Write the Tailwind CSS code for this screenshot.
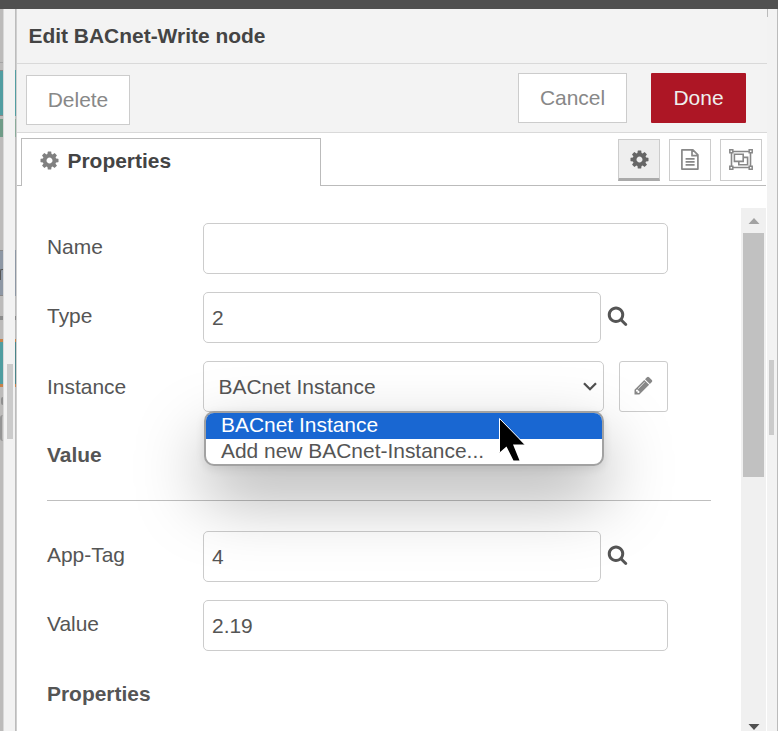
<!DOCTYPE html>
<html lang="en">
<head>
<meta charset="utf-8">
<title>Edit BACnet-Write node</title>
<script src="https://cdn.jsdelivr.net/npm/@tailwindcss/browser@4"></script>
</head>
<body class="w-[778px] h-[731px] overflow-hidden bg-white font-['Liberation_Sans',Arial,sans-serif] text-[20.95px] leading-6 text-[#555]">
<svg class="hidden">
  <symbol id="cog" viewBox="0 0 1792 1792"><path d="M1152 896q0-106-75-181t-181-75-181 75-75 181 75 181 181 75 181-75 75-181zm512-109v222q0 12-8 23t-20 13l-185 28q-19 54-39 91 35 50 107 138 10 12 10 25t-9 23q-27 37-99 108t-94 71q-12 0-26-9l-138-108q-44 23-91 38-16 136-29 186-7 28-36 28h-222q-14 0-24.5-8.5t-11.5-21.5l-28-184q-49-16-90-37l-141 107q-10 9-25 9-14 0-25-11-126-114-165-168-7-10-7-23 0-12 8-23 15-21 51-66.5t54-70.5q-27-50-41-99l-183-27q-13-2-21-12.5t-8-23.5v-222q0-12 8-23t19-13l186-28q14-46 39-92-40-57-107-138-10-12-10-24 0-10 9-23 26-36 98.5-107.5t94.5-71.5q13 0 26 10l138 107q44-23 91-38 16-136 29-186 7-28 36-28h222q14 0 24.5 8.5t11.5 21.5l28 184q49 16 90 37l142-107q9-9 24-9 13 0 25 10 129 119 165 170 7 8 7 22 0 12-8 23-15 21-51 66.5t-54 70.5q26 50 41 98l183 28q13 2 21 12.5t8 23.5z"/></symbol>
  <symbol id="search" viewBox="0 0 1792 1792"><path d="M1216 832q0-185-131.5-316.5t-316.5-131.5-316.5 131.5-131.5 316.5 131.5 316.5 316.5 131.5 316.5-131.5 131.5-316.5zm512 832q0 52-38 90t-90 38q-54 0-90-38l-343-342q-179 124-399 124-143 0-273.5-55.5t-225-150-150-225-55.5-273.5 55.5-273.5 150-225 225-150 273.5-55.5 273.5 55.5 225 150 150 225 55.5 273.5q0 220-124 399l343 343q37 37 37 90z"/></symbol>
</svg>
<div class="flex flex-col h-full">
  <div class="h-[9px] shrink-0 bg-[#505050]"></div>
  <div class="flex flex-1 min-h-0">
    <!-- dimmed flow canvas behind the tray -->
    <div class="w-[3px] flex flex-col shrink-0 bg-[#bcbbba]">
      <div class="h-[53px]"></div><div class="h-px bg-[#a5a5a5]"></div><div class="h-[7px]"></div>
      <div class="h-[46px] border-y border-[#888] bg-[#519da1]"></div><div class="h-[3px]"></div>
      <div class="h-[18px] bg-[#6f9c88]"></div><div class="h-[113px]"></div>
      <div class="h-[46px] border-y border-[#888] bg-[#8d97a4] pt-[18px]"><div class="w-[3px] h-[11px] border-l border-t border-[#555] rounded-tl-[2px]"></div></div><div class="h-5"></div>
      <div class="h-1 bg-[#8c8c8c]"></div><div class="h-[19px]"></div>
      <div class="h-12 border-y-[3px] border-[#c8824a] bg-[#4f9da0]"></div><div class="h-[10px]"></div>
      <div class="h-2 w-[2px] ml-px bg-[#8f8f8f] rounded-l"></div><div class="h-[10px]"></div><div class="h-[26px] border-l-2 border-[#959595] rounded-l-full"></div>
    </div>
    <div class="w-px shrink-0 bg-[#d8d8d8]"></div>
    <div class="w-[11px] shrink-0 bg-[#f2f2f2] pt-[355px] pl-[3px]"><div class="w-[6px] h-[75px] bg-[#cbcbcb]"></div></div>
    <div class="w-px shrink-0 flex flex-col bg-[#bcbcbc]">
      <div class="h-[61px]"></div><div class="h-[46px] bg-[#519da1]"></div><div class="h-[3px]"></div><div class="h-[18px] bg-[#8aab9a]"></div>
      <div class="h-[113px]"></div><div class="h-[46px] bg-[#8d97a4]"></div><div class="h-[20px]"></div><div class="h-1 bg-[#888]"></div><div class="h-[19px]"></div>
      <div class="h-12 border-y-[3px] border-[#c8824a] bg-[#4a8589]"></div>
    </div>
    <div class="w-px shrink-0 bg-[#cfcfcf]"></div>

    <main class="w-[750px] shrink-0 flex flex-col bg-white">
      <header class="h-[55px] shrink-0 bg-[#f3f3f3] border-b border-[#d9d9d9] pl-[11.5px] pt-[15px] font-bold text-[#444] leading-6">Edit BACnet-Write node</header>
      <div class="h-[69px] shrink-0 bg-[#f3f3f3] border-b border-[#d9d9d9] flex pl-[9px] pt-[9px] pr-[21px] text-[#888]">
        <button class="mt-[2px] w-[104px] h-[50px] border border-[#ccc] bg-white">Delete</button>
        <button class="ml-auto w-[109px] h-[50px] border border-[#ccc] bg-white">Cancel</button>
        <button class="ml-6 w-[95px] h-[50px] bg-[#ad1625] text-[#eee] rounded-[1px]">Done</button>
      </div>
      <div class="h-[53px] w-[749px] shrink-0 flex pt-[5px]">
        <div class="w-1 border-b border-[#bbb]"></div>
        <div class="w-[300px] border-t border-x border-[#bbb] flex pl-[17px] pt-[11px] font-bold text-[#444]">
          <svg class="size-[21px] fill-[#808080] mr-[7.5px]"><use href="#cog"/></svg><span class="-mt-px">Properties</span>
        </div>
        <div class="flex-1 border-b border-[#bbb] flex justify-end gap-[9px] pr-1 pt-px">
          <div class="size-[42px] border border-[#ccc] border-b-[3px] border-b-[#aaa] bg-[#eee] flex justify-center pt-[9px]"><svg class="size-[21px] fill-[#666]"><use href="#cog"/></svg></div>
          <div class="size-[42px] border border-[#ccc] flex justify-center pt-[9px]"><svg class="size-[21px]" viewBox="0 0 21 21" fill="none" stroke="#888" stroke-width="1.7"><path d="M1.9 .9h11l5 5v14.2h-16zM12 .9v5.8h5.8M5.6 9.8h9M5.6 12.8h9M5.6 15.8h9" stroke-linejoin="round"/></svg></div>
          <div class="size-[42px] border border-[#ccc] flex justify-center pt-[9px]"><svg class="w-6 h-[21px] shrink-0" viewBox="0 0 24 21" fill="none" stroke="#888" stroke-width="1.6"><path d="M4 2.5h16M4 18.5h16M2.5 4v13M21.5 4v13M5.4 5.2h8.8v7.2h-8.8zM14.2 8.4h4.4v7.4h-8.8v-3.4"/><path stroke-width="1.5" d="M.8 .8h3v3h-3zM20.2 .8h3v3h-3zM.8 17.2h3v3h-3zM20.2 17.2h3v3h-3z"/></svg></div>
        </div>
      </div>
      <div class="flex-1 min-h-0 flex pt-[22px]">
        <form class="w-[724px] pl-[30px] pt-[15px] relative flex flex-col gap-[18px] shrink-0 h-full">
          <div class="h-[51px] shrink-0 flex"><label class="w-[156px] pt-3">Name</label><div class="w-[465px] border border-[#ccc] rounded-[5px]"></div></div>
          <div class="h-[51px] shrink-0 flex"><label class="w-[156px] pt-3">Type</label><div class="w-[398px] border border-[#ccc] rounded-[5px] pl-2 pt-[13px]">2</div><svg class="size-[21px] ml-[5.5px] mt-[13px] fill-[#555]"><use href="#search"/></svg></div>
          <div class="h-[51px] shrink-0 flex"><label class="w-[156px] pt-[14px]">Instance</label>
            <div class="w-[401px] border border-[#ccc] rounded-[5px] pl-[14.5px] pr-[6px] pt-[13px] flex justify-between">BACnet Instance<svg class="w-[14px] h-[9px] mt-[7px]" viewBox="0 0 14 9" fill="none" stroke="#505050" stroke-width="2.3"><path d="M1 1.2l6 6 6-6"/></svg></div>
            <div class="ml-[15px] w-[49px] border border-[#ccc] rounded-[3px] pl-[13px] pt-[13px]"><svg class="size-[21px] fill-[#888]" viewBox="0 0 1792 1792"><path d="M491 1536l91-91-235-235-91 91v107h128v128h107zm523-928q0-22-22-22-10 0-17 7l-542 542q-7 7-7 17 0 22 22 22 10 0 17-7l542-542q7-7 7-17zm-54-192l416 416-832 832h-416v-416zm683 96q0 53-37 90l-166 166-416-416 166-165q36-38 90-38 53 0 91 38l235 234q37 39 37 91z"/></svg></div>
          </div>
          <div class="h-[71px] w-[664px] shrink-0 border-b border-[#bfbfbf] pt-[13px] font-bold">Value</div>
          <div class="h-[51px] mt-3 shrink-0 flex"><label class="w-[156px] pt-3">App-Tag</label><div class="w-[398px] border border-[#ccc] rounded-[5px] pl-2 pt-[13px]">4</div><svg class="size-[21px] ml-[5.5px] mt-[13px] fill-[#555]"><use href="#search"/></svg></div>
          <div class="h-[51px] shrink-0 flex"><label class="w-[156px] pt-3">Value</label><div class="w-[465px] border border-[#ccc] rounded-[5px] pl-2 pt-[13px]">2.19</div></div>
          <div class="font-bold pt-[13px]">Properties</div>

          <div class="absolute left-[187px] top-[203px] w-[400px] h-[55px] border-2 border-[#a2a2a2] rounded-[10px] bg-white shadow-[0_30px_68px_rgba(0,0,0,0.34),0_3px_10px_rgba(0,0,0,0.1)]">
            <div class="h-[26px] bg-[#1967d2] rounded-t-[8px] text-white pl-[15px] leading-[24px]">BACnet Instance</div>
            <div class="h-[25px] pl-[15px] leading-[24px]">Add new BACnet-Instance...</div>
          </div>
          <svg class="absolute left-[481px] top-[209px] w-[28px] h-[46px]" viewBox="0 0 28 46"><path d="M1.5 1.5V35.5L8.5 29.5L15.5 43.5H21.5L15 27.5H26.5z" fill="#000"/><path d="M1.5 35V1.5L26.5 27" fill="none" stroke="#fff"/></svg>
        </form>
        <div class="w-[25px] bg-[#f0f0f0] flex flex-col items-center shrink-0">
          <svg class="h-[25px] w-3 shrink-0" viewBox="0 0 12 25"><path d="M0.5 16L6 10L11.5 16z" fill="#a2a2a2"/></svg>
          <div class="w-[21px] h-[244px] bg-[#c1c1c1] shrink-0"></div>
          <svg class="h-[6px] w-3 mt-auto mb-px shrink-0" viewBox="0 0 12 6"><path d="M0.5 0h11L6 6z" fill="#505050"/></svg>
        </div>
      </div>
    </main>
    <div class="w-[10px] shrink-0 bg-[#f2f2f2]"><div class="w-px h-2 bg-[#bbb]"></div><div class="w-[5px] h-[75px] ml-[2px] mt-[343px] bg-[#cbcbcb]"></div></div>
    <div class="w-px shrink-0 bg-[#bbb]"></div>
  </div>
</div>
</body>
</html>
